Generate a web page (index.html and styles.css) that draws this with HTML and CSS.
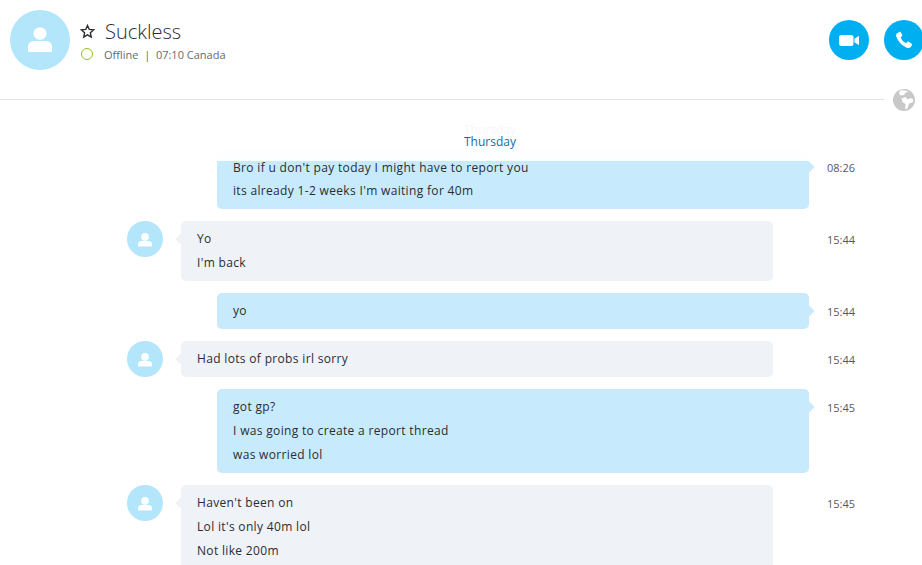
FILE: index.html
```html
<!DOCTYPE html>
<html lang="en">
<head>
    <meta charset="UTF-8">
    <meta name="viewport" content="width=device-width, initial-scale=1.0">
    <title>Suckless</title>
    <link rel="stylesheet" href="styles.css">
</head>
<body>

    <!-- Header -->
    <div class="header">
        <div class="contact-avatar">
            <svg viewBox="0 0 24 26" width="24" height="26"><ellipse cx="12" cy="6.500" rx="6.500" ry="6.300"/><path d="M0 25v-5.500c0-3 2.500-5.500 6-5.500h12c3.500 0 6 2.500 6 5.500v5.500z"/></svg>
        </div>
        <div class="contact-info">
            <div class="contact-name">
                <svg class="star" viewBox="0 0 16 16" width="15" height="15"><path d="M8 1.600l1.900 4.200 4.600.5-3.400 3.100.9 4.500L8 11.600l-4 2.300.9-4.500L1.500 6.300l4.600-.5z"/></svg>
                <span>Suckless</span>
            </div>
            <div class="contact-status">
                <span class="presence"></span>
                <span>Offline&nbsp; |&nbsp; 07:10 Canada</span>
            </div>
        </div>
        <div class="call-buttons">
            <div class="call-btn">
                <svg viewBox="0 0 20 11" width="20" height="11"><rect x="0" y="0" width="14.500" height="11" rx="2.500"/><path d="M15.500 3.800L20 .8v9.400l-4.500-3z"/></svg>
            </div>
            <div class="call-btn">
                <svg viewBox="0 0 20 20" width="18" height="18"><path d="M4.800 1L2 2.800C1 3.500 1 5 1.500 6.500c2 5.500 6.500 10 11.500 12 2 .7 3.500.5 4.500-.7l1.300-2c.3-.6.200-1.100-.3-1.500l-3.200-2.300c-.6-.4-1.100-.3-1.600.2l-1.300 1.400c-2.700-1.200-5-3.700-6.100-6.500l1.400-1.200c.5-.5.600-1 .3-1.600L6.400 1.300C6 .8 5.400.6 4.800 1z"/></svg>
            </div>
        </div>
    </div>

    <div class="divider">
        <div class="divider-line"></div>
        <svg class="globe" viewBox="0 0 22 22" width="22" height="22">
            <circle cx="11" cy="11" r="11" fill="#c8c8c8"/>
            <path d="M7 1.500C9 1 13 1 15.500 3l-3 .5-1.500 2.500-3.500.5L6 4.500zM8.500 9.500l4-1.500 2 2.500 3-1.500 3 1.500-1 3-3.500 1-1.500 5-2.500.5.5-5-3-2z" fill="#fff"/>
        </svg>
    </div>

    <div class="day">Thursday</div>

    <!-- Messages -->
    <div class="log">
        <div class="row first">
            <div class="bubble out">
                <p>Bro if u don't pay today I might have to report you</p>
                <p>its already 1-2 weeks I'm waiting for 40m</p>
            </div>
            <div class="time">08:26</div>
        </div>

        <div class="row">
            <div class="avatar"><svg viewBox="0 0 24 24" width="14" height="15"><circle cx="12" cy="7.500" r="6.500"/><path d="M0 24v-4c0-3.500 3-5.500 6-5.500h12c3 0 6 2 6 5.500v4z"/></svg></div>
            <div class="bubble in">
                <p>Yo</p>
                <p>I'm back</p>
            </div>
            <div class="time">15:44</div>
        </div>

        <div class="row">
            <div class="bubble out">
                <p>yo</p>
            </div>
            <div class="time">15:44</div>
        </div>

        <div class="row">
            <div class="avatar"><svg viewBox="0 0 24 24" width="14" height="15"><circle cx="12" cy="7.500" r="6.500"/><path d="M0 24v-4c0-3.500 3-5.500 6-5.500h12c3 0 6 2 6 5.500v4z"/></svg></div>
            <div class="bubble in">
                <p>Had lots of probs irl sorry</p>
            </div>
            <div class="time">15:44</div>
        </div>

        <div class="row">
            <div class="bubble out">
                <p>got gp?</p>
                <p>I was going to create a report thread</p>
                <p>was worried lol</p>
            </div>
            <div class="time">15:45</div>
        </div>

        <div class="row">
            <div class="avatar"><svg viewBox="0 0 24 24" width="14" height="15"><circle cx="12" cy="7.500" r="6.500"/><path d="M0 24v-4c0-3.500 3-5.500 6-5.500h12c3 0 6 2 6 5.500v4z"/></svg></div>
            <div class="bubble in">
                <p>Haven't been on</p>
                <p>Lol it's only 40m lol</p>
                <p>Not like 200m</p>
            </div>
            <div class="time">15:45</div>
        </div>
    </div>

</body>
</html>
```

FILE: styles.css
```css
* {
    margin: 0;
    padding: 0;
    box-sizing: border-box;
}

body {
    display: flex;
    flex-direction: column;
    height: 100vh;
    overflow: hidden;
    background: #fff;
    color: #2b2c33;
    font-family: "Open Sans", "Noto Sans", sans-serif;
    font-size: 12px;
}

/* Header */
.header {
    display: flex;
    flex: none;
    align-items: flex-start;
    height: 89px;
    padding: 10px 0 0 10px;
}

.contact-avatar {
    width: 60px;
    height: 60px;
    border-radius: 50%;
    background: #b3e5fb;
    display: flex;
    align-items: center;
    justify-content: center;
}

.contact-avatar svg {
    fill: #fff;
}

.contact-info {
    margin-left: 10px;
    flex: 1;
}

.contact-name {
    display: flex;
    align-items: center;
    height: 28px;
    margin-top: 7px;
    font-size: 20px;
    font-weight: 300;
    color: #2b2c33;
}

.star {
    fill: none;
    stroke: #2b2c33;
    stroke-width: 1.500;
    margin-right: 10px;
}

.contact-status {
    display: flex;
    align-items: center;
    height: 20px;
    margin-top: -1px;
    color: #666a73;
    font-size: 11px;
}

.presence {
    width: 12px;
    height: 12px;
    margin: 0 11px 0 1px;
    border: 1.500px solid #97c11f;
    border-radius: 50%;
}

.call-buttons {
    display: flex;
    gap: 15px;
    margin-right: -2px;
}

.call-btn {
    width: 40px;
    height: 40px;
    margin-top: 10px;
    border-radius: 50%;
    background: #00aff0;
    display: flex;
    align-items: center;
    justify-content: center;
}

.call-btn svg {
    fill: #fff;
}

.divider {
    display: flex;
    flex: none;
    align-items: flex-start;
    height: 22px;
}

.divider-line {
    width: 884px;
    height: 1px;
    margin-top: 10px;
    background: #dfe3e6;
}

.globe {
    margin-left: 9px;
}

/* the scrolled-away content shows faintly through the header */
.day {
    position: relative;
    flex: none;
    text-align: center;
    margin-top: 22px;
    height: 18px;
    padding-left: 58px;
    line-height: 18px;
    color: #0d6fa8;
}

.day::before {
    content: "Thursday";
    position: absolute;
    top: -12px;
    left: 0;
    right: 0;
    padding-left: 58px;
    color: #f6f7f8;
}

.day::after {
    content: "";
    position: absolute;
    top: 17px;
    left: 217px;
    width: 592px;
    height: 11px;
    border-radius: 5px 5px 0 0;
    background: #fcfeff;
}

/* Messages */
.log {
    flex: 1;
    min-height: 0;
    margin-top: 10px;
    padding-left: 127px;
}

.row {
    display: flex;
    align-items: flex-start;
    margin-bottom: 12px;
}

.avatar {
    flex: none;
    width: 36px;
    height: 36px;
    margin-right: 18px;
    border-radius: 50%;
    background: #b3e5fb;
    display: flex;
    align-items: center;
    justify-content: center;
}

.avatar svg {
    fill: #fff;
}

.bubble {
    position: relative;
    flex: none;
    width: 592px;
    padding: 6px 16px;
    border-radius: 5px;
    line-height: 24px;
    letter-spacing: 0.33px;
}

.bubble::after {
    content: "";
    position: absolute;
    top: 14px;
    width: 8px;
    height: 8px;
    border-radius: 1px;
    transform: rotate(45deg);
    background: inherit;
}

.bubble.in {
    background: #eff2f7;
}

.bubble.in::after {
    left: -4px;
}

.bubble.out {
    margin-left: 90px;
    background: #c7ebfc;
}

.bubble.out::after {
    right: -4px;
}

.time {
    margin-left: 18px;
    padding-top: 9px;
    line-height: 20px;
    font-size: 11px;
    color: #555862;
}

.bubble.in + .time {
    margin-left: 54px;
}

/* first message is scrolled under the header, only its lower part shows */
.first .bubble {
    padding-top: 0;
    border-radius: 0 0 5px 5px;
}

.first .bubble::after {
    top: 2px;
}

.first .bubble p:first-child {
    line-height: 13px;
    margin-bottom: 5px;
}

.first .time {
    padding-top: 0;
    line-height: 14px;
}
```
